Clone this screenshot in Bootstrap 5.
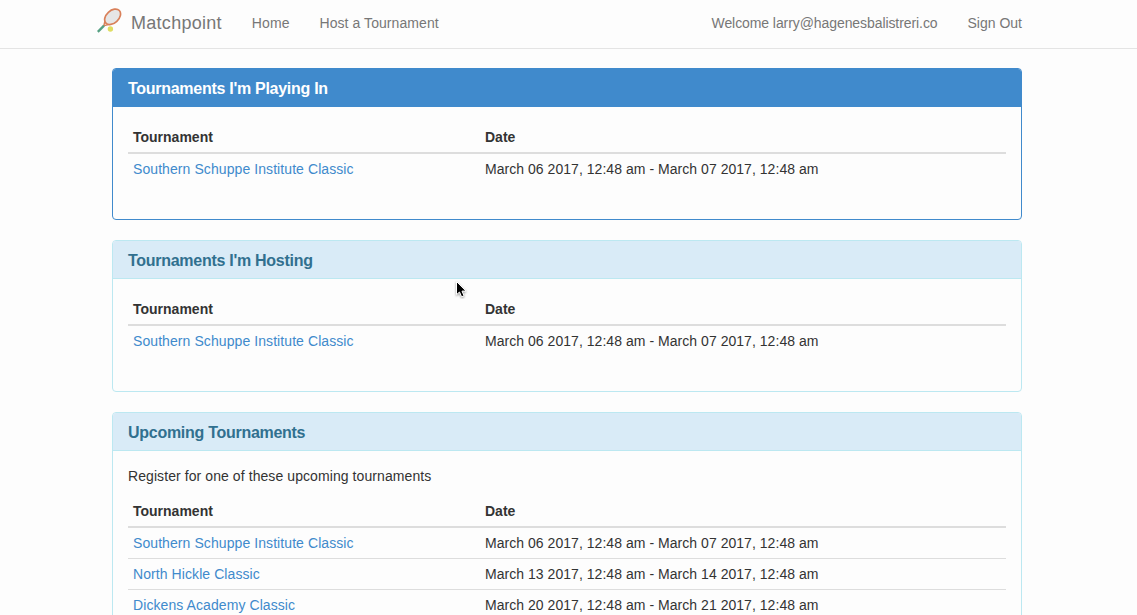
<!DOCTYPE html>
<html lang="en">
<head>
<meta charset="utf-8">
<meta name="viewport" content="width=device-width, initial-scale=1">
<title>Matchpoint</title>
<link href="https://cdn.jsdelivr.net/npm/bootstrap@5.3.0/dist/css/bootstrap.min.css" rel="stylesheet">
<style>
html { overflow: hidden; }
body { height: 100vh; overflow: hidden; background: #fdfdfd; color: #333; font: 14px/20px "Liberation Sans", Arial, sans-serif; }
.page-width { width: 940px; max-width: none; margin-left: 97px; margin-right: 0; }
main.page-width { padding: 0 15px; }
.topbar { height: 49px; border-bottom: 1px solid #e4e4e4; margin-bottom: 19px; }
.topbar .page-width { padding-bottom: 2px; }
.topbar a, .topbar span { color: #777; text-decoration: none; white-space: nowrap; }
.topbar .brand-text { font-size: 18px; letter-spacing: .28px; margin-left: 9px; }
.racket { margin-top: -4px; }
.nav-entry { margin-left: 30px; letter-spacing: .07px; }
.welcome { letter-spacing: -.08px; }
.sign-out { margin: 0 15px 0 30px; }
.panel-box { border-radius: 4px; border: 1px solid #bce8f1; background: transparent; margin-bottom: 20px; }
.panel-box .card-header { padding: 11px 15px 9px; height: 38px; border-bottom: 1px solid #bce8f1; border-radius: 3px 3px 0 0; background: #d9ebf7; color: #31708f; }
.panel-box h2 { font-size: 16px; line-height: 17px; font-weight: 700; letter-spacing: -.28px; margin: 0; white-space: nowrap; }
.panel-box .card-body { padding: 15px; }
.panel-box .intro { margin-bottom: 10px; letter-spacing: .08px; }
.panel-main, .panel-main .card-header { border-color: #408acc; }
.panel-main .card-header { background: #408acc; color: #fff; }
.event-table { margin-bottom: 20px; table-layout: fixed; border-collapse: separate; border-spacing: 0; color: #333; --bs-table-bg: transparent; --bs-table-color: #333; }
.event-table > :not(caption) > * > * { padding: 5px; border: 0; height: 30px; }
.event-table > thead > tr > th { border-bottom: 2px solid #ddd; height: 32px; }
.event-table > tbody > tr > td { letter-spacing: .04px; }
.event-table > tbody > tr + tr > td { border-top: 1px solid #ddd; height: 31px; }
.event-table a { color: #408acc; text-decoration: none; letter-spacing: .08px; }
.event-table th:first-child { width: 352px; }
.pointer { position: absolute; left: 454px; top: 279px; }
.pointer path { filter: drop-shadow(0 1px 1px #0006); }
</style>
</head>
<body>
<nav class="topbar">
  <div class="page-width d-flex align-items-center h-100">
    <a class="d-flex align-items-center" href="#">
      <svg class="racket" width="25" height="26" viewBox="0 0 25 26">
        <path d="M8.2 11.8L6.8 17.8L13 16" stroke="#d9805a" stroke-width="1.4" fill="none"/>
        <path d="M.8 23.8L7 17.6" stroke="#55a083" stroke-width="2.4"/>
        <ellipse cx="15.6" cy="8.8" rx="6.2" ry="9.2" transform="rotate(47 15.6 8.8)" fill="#e6e6e6" stroke="#d9805a" stroke-width="1.7"/>
        <circle cx="13.4" cy="21" r="2.7" fill="#dfdd62"/>
      </svg>
      <span class="brand-text">Matchpoint</span>
    </a>
    <a class="nav-entry" href="#">Home</a>
    <a class="nav-entry" href="#">Host a Tournament</a>
    <span class="ms-auto welcome">Welcome larry@hagenesbalistreri.co</span>
    <a class="sign-out" href="#">Sign Out</a>
  </div>
</nav>
<main class="page-width">
  <section class="card panel-box panel-main">
    <div class="card-header"><h2>Tournaments I'm Playing In</h2></div>
    <div class="card-body">
      <table class="table event-table">
        <thead><tr><th>Tournament</th><th>Date</th></tr></thead>
        <tbody><tr><td><a href="#">Southern Schuppe Institute Classic</a></td><td>March 06 2017, 12:48 am - March 07 2017, 12:48 am</td></tr></tbody>
      </table>
    </div>
  </section>
  <section class="card panel-box">
    <div class="card-header"><h2>Tournaments I'm Hosting</h2></div>
    <div class="card-body">
      <table class="table event-table">
        <thead><tr><th>Tournament</th><th>Date</th></tr></thead>
        <tbody><tr><td><a href="#">Southern Schuppe Institute Classic</a></td><td>March 06 2017, 12:48 am - March 07 2017, 12:48 am</td></tr></tbody>
      </table>
    </div>
  </section>
  <section class="card panel-box">
    <div class="card-header"><h2>Upcoming Tournaments</h2></div>
    <div class="card-body">
      <p class="intro">Register for one of these upcoming tournaments</p>
      <table class="table event-table">
        <thead><tr><th>Tournament</th><th>Date</th></tr></thead>
        <tbody>
          <tr><td><a href="#">Southern Schuppe Institute Classic</a></td><td>March 06 2017, 12:48 am - March 07 2017, 12:48 am</td></tr>
          <tr><td><a href="#">North Hickle Classic</a></td><td>March 13 2017, 12:48 am - March 14 2017, 12:48 am</td></tr>
          <tr><td><a href="#">Dickens Academy Classic</a></td><td>March 20 2017, 12:48 am - March 21 2017, 12:48 am</td></tr>
        </tbody>
      </table>
    </div>
  </section>
</main>
<svg class="pointer" width="14" height="20" viewBox="0 0 14 20">
  <path d="M2.5 2.5v13.2l3-2.7 2.1 4.8 2.4-1-2-4.7h4z" fill="#000" stroke="#fff" stroke-width="1"/>
</svg>
<script src="https://cdn.jsdelivr.net/npm/bootstrap@5.3.0/dist/js/bootstrap.bundle.min.js"></script>
</body>
</html>
